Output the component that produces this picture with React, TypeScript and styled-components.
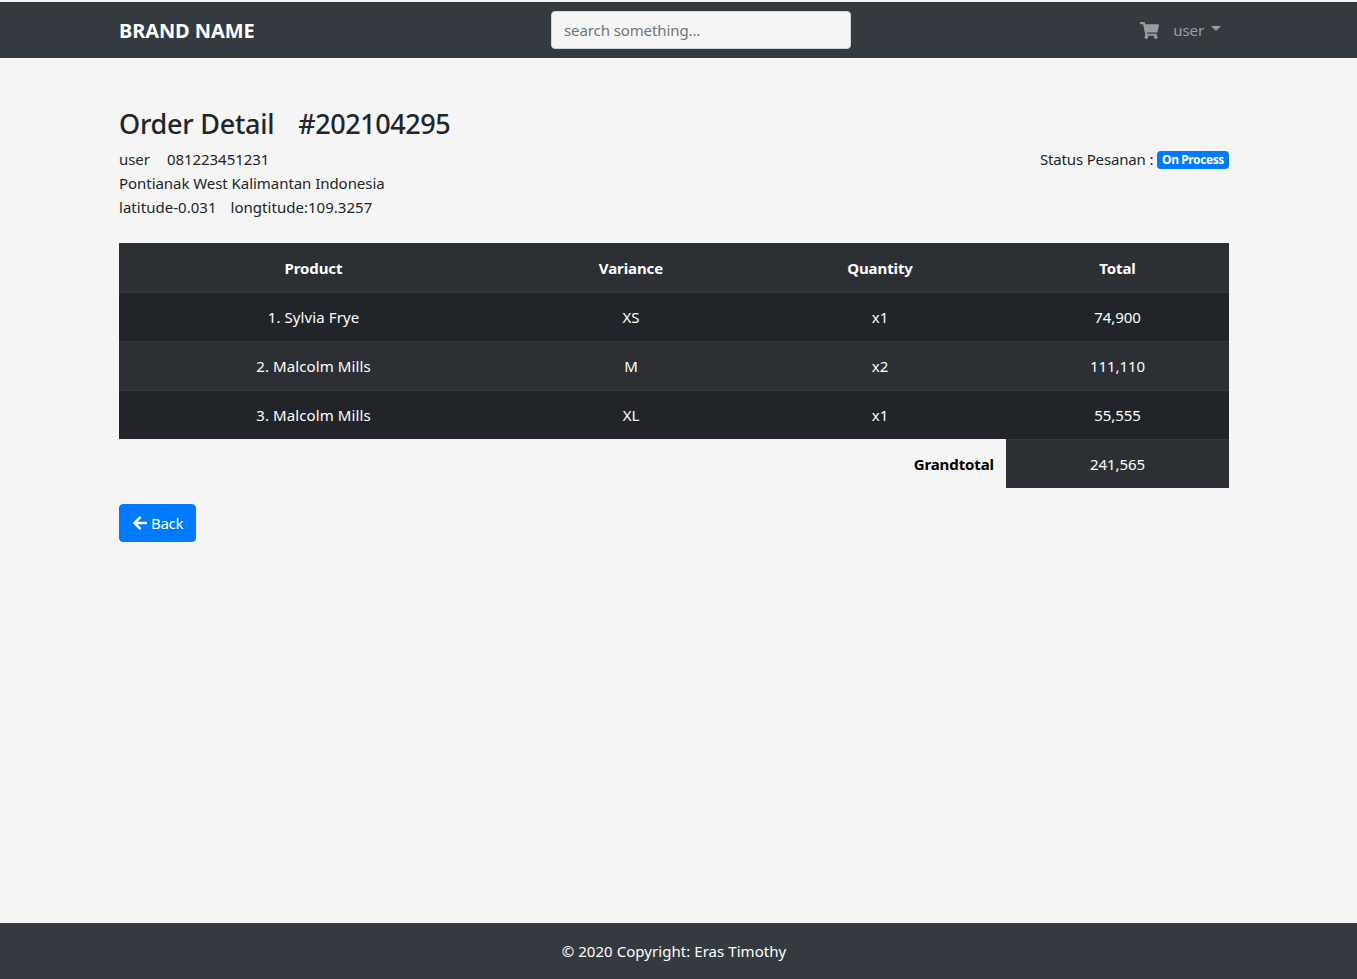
import React from "react";
import styled, { createGlobalStyle } from "styled-components";
import { FaArrowLeft, FaShoppingCart } from "react-icons/fa";

const FONT = `"Noto Sans", "Open Sans", "Liberation Sans", sans-serif`;

const rows = [
  { product: "1. Sylvia Frye", variance: "XS", quantity: "x1", total: "74,900" },
  { product: "2. Malcolm Mills", variance: "M", quantity: "x2", total: "111,110" },
  { product: "3. Malcolm Mills", variance: "XL", quantity: "x1", total: "55,555" },
];

const GlobalStyle = createGlobalStyle`
  body {
    margin: 0;
    background: #f5f5f5;
    color: #212529;
    font-family: ${FONT};
    font-size: 15px;
    line-height: 24px;
    letter-spacing: -0.1px;
  }
`;

function App() {
  return (
    <>
      <GlobalStyle />
      <Page>
        <Navbar>
          <Brand>BRAND NAME</Brand>
          <Search placeholder="search something..." />
          <NavRight>
            <FaShoppingCart size={19} />
            <UserMenu>user</UserMenu>
          </NavRight>
        </Navbar>
        <Main>
          <Title>
            <span>Order Detail</span>
            <OrderNumber>#202104295</OrderNumber>
          </Title>
          <InfoRow>
            <div>
              <InfoLine $gap={17}>
                <span>user</span>
                <span>081223451231</span>
              </InfoLine>
              <InfoLine $gap={17}>Pontianak West Kalimantan Indonesia</InfoLine>
              <InfoLine $gap={14} $spacing={0.03}>
                <span>latitude-0.031</span>
                <span>longtitude:109.3257</span>
              </InfoLine>
            </div>
            <Status>
              Status Pesanan : <Badge>On Process</Badge>
            </Status>
          </InfoRow>
          <OrderTable>
            <colgroup>
              <col style={{ width: 389 }} />
              <col style={{ width: 246 }} />
              <col style={{ width: 252 }} />
              <col style={{ width: 223 }} />
            </colgroup>
            <thead>
              <tr>
                <Th>Product</Th>
                <Th>Variance</Th>
                <Th>Quantity</Th>
                <Th>Total</Th>
              </tr>
            </thead>
            <tbody>
              {rows.map((row, i) => (
                <tr key={row.product}>
                  <ProductCell $striped={i % 2 === 1}>{row.product}</ProductCell>
                  <Td $striped={i % 2 === 1}>{row.variance}</Td>
                  <Td $striped={i % 2 === 1}>{row.quantity}</Td>
                  <Td $striped={i % 2 === 1}>{row.total}</Td>
                </tr>
              ))}
              <tr>
                <GrandLabel colSpan={3}>Grandtotal</GrandLabel>
                <Td $striped>241,565</Td>
              </tr>
            </tbody>
          </OrderTable>
          <BackButton type="button">
            <FaArrowLeft size={16} />
            Back
          </BackButton>
        </Main>
        <Footer>© 2020 Copyright: Eras Timothy</Footer>
      </Page>
    </>
  );
}

export default App;

const Page = styled.div`
  display: flex;
  flex-direction: column;
  min-height: 100vh;
  padding-top: 2px;
  box-sizing: border-box;
`;

const Navbar = styled.nav`
  display: grid;
  grid-template-columns: 432px 300px 1fr;
  align-items: center;
  height: 56px;
  padding: 0 136px 0 119px;
  background: #343a40;
`;

const Brand = styled.div`
  padding-top: 1px;
  color: #fff;
  font-size: 20px;
  font-weight: 700;
  line-height: 26px;
  letter-spacing: -0.1px;
`;

const Search = styled.input`
  box-sizing: border-box;
  width: 300px;
  height: 38px;
  padding: 6px 12px;
  border: 1px solid #ced4da;
  border-radius: 4px;
  background: #f5f5f5;
  font-family: ${FONT};
  font-size: 15px;
  letter-spacing: -0.1px;

  &::placeholder {
    color: #6c757d;
    opacity: 1;
  }
`;

const NavRight = styled.div`
  display: flex;
  justify-content: flex-end;
  align-items: center;
  gap: 14px;
  color: rgba(255, 255, 255, 0.5);
`;

const UserMenu = styled.span`
  display: flex;
  align-items: center;

  &::after {
    content: "";
    margin-left: 7px;
    margin-top: -3px;
    border-top: 5px solid;
    border-right: 5px solid transparent;
    border-left: 5px solid transparent;
  }
`;

const Main = styled.main`
  flex: 1;
  padding: 49px 128px 0 119px;
`;

const Title = styled.h1`
  display: flex;
  gap: 24px;
  margin: 0 0 6px;
  font-size: 27px;
  font-weight: 500;
  line-height: 34px;
  letter-spacing: -0.25px;
`;

const OrderNumber = styled.span`
  letter-spacing: -0.45px;
`;

const InfoRow = styled.div`
  display: flex;
  justify-content: space-between;
  margin-bottom: 24px;
`;

const InfoLine = styled.div<{ $gap: number; $spacing?: number }>`
  display: flex;
  gap: ${(p) => p.$gap}px;
  letter-spacing: ${(p) => p.$spacing ?? -0.05}px;
`;

const Status = styled.div`
  white-space: pre-wrap;
  letter-spacing: -0.15px;
`;

const Badge = styled.span`
  display: inline-block;
  padding: 3px 5px;
  border-radius: 4px;
  background: #007bff;
  color: #fff;
  font-size: 12px;
  font-weight: 700;
  line-height: 12px;
  letter-spacing: -0.4px;
  vertical-align: 1px;
`;

const OrderTable = styled.table`
  width: 1110px;
  table-layout: fixed;
  border-collapse: collapse;
  margin-bottom: 16px;
`;

const Th = styled.th`
  height: 49px;
  padding: 13px 12px 11px;
  box-sizing: border-box;
  background: #2c3034;
  color: #fff;
  font-weight: 700;
  text-align: center;
`;

const Td = styled.td<{ $striped?: boolean }>`
  height: 49px;
  padding: 12px;
  box-sizing: border-box;
  border-top: 1px solid #32383e;
  background: ${(p) => (p.$striped ? "#2c3034" : "#212529")};
  color: #fff;
  text-align: center;
`;

const ProductCell = styled(Td)`
  letter-spacing: 0.1px;
`;

const GrandLabel = styled.td`
  height: 49px;
  padding: 12px;
  box-sizing: border-box;
  color: #000;
  font-weight: 700;
  text-align: right;
`;

const BackButton = styled.button`
  display: flex;
  align-items: center;
  gap: 3px;
  height: 38px;
  padding: 0 12px;
  border: 1px solid #007bff;
  border-radius: 4px;
  background: #007bff;
  color: #fff;
  font-family: ${FONT};
  font-size: 15px;
  letter-spacing: -0.3px;
`;

const Footer = styled.footer`
  height: 56px;
  padding-right: 9px;
  background: #343a40;
  color: #fff;
  line-height: 56px;
  letter-spacing: 0.05px;
  text-align: center;
`;
